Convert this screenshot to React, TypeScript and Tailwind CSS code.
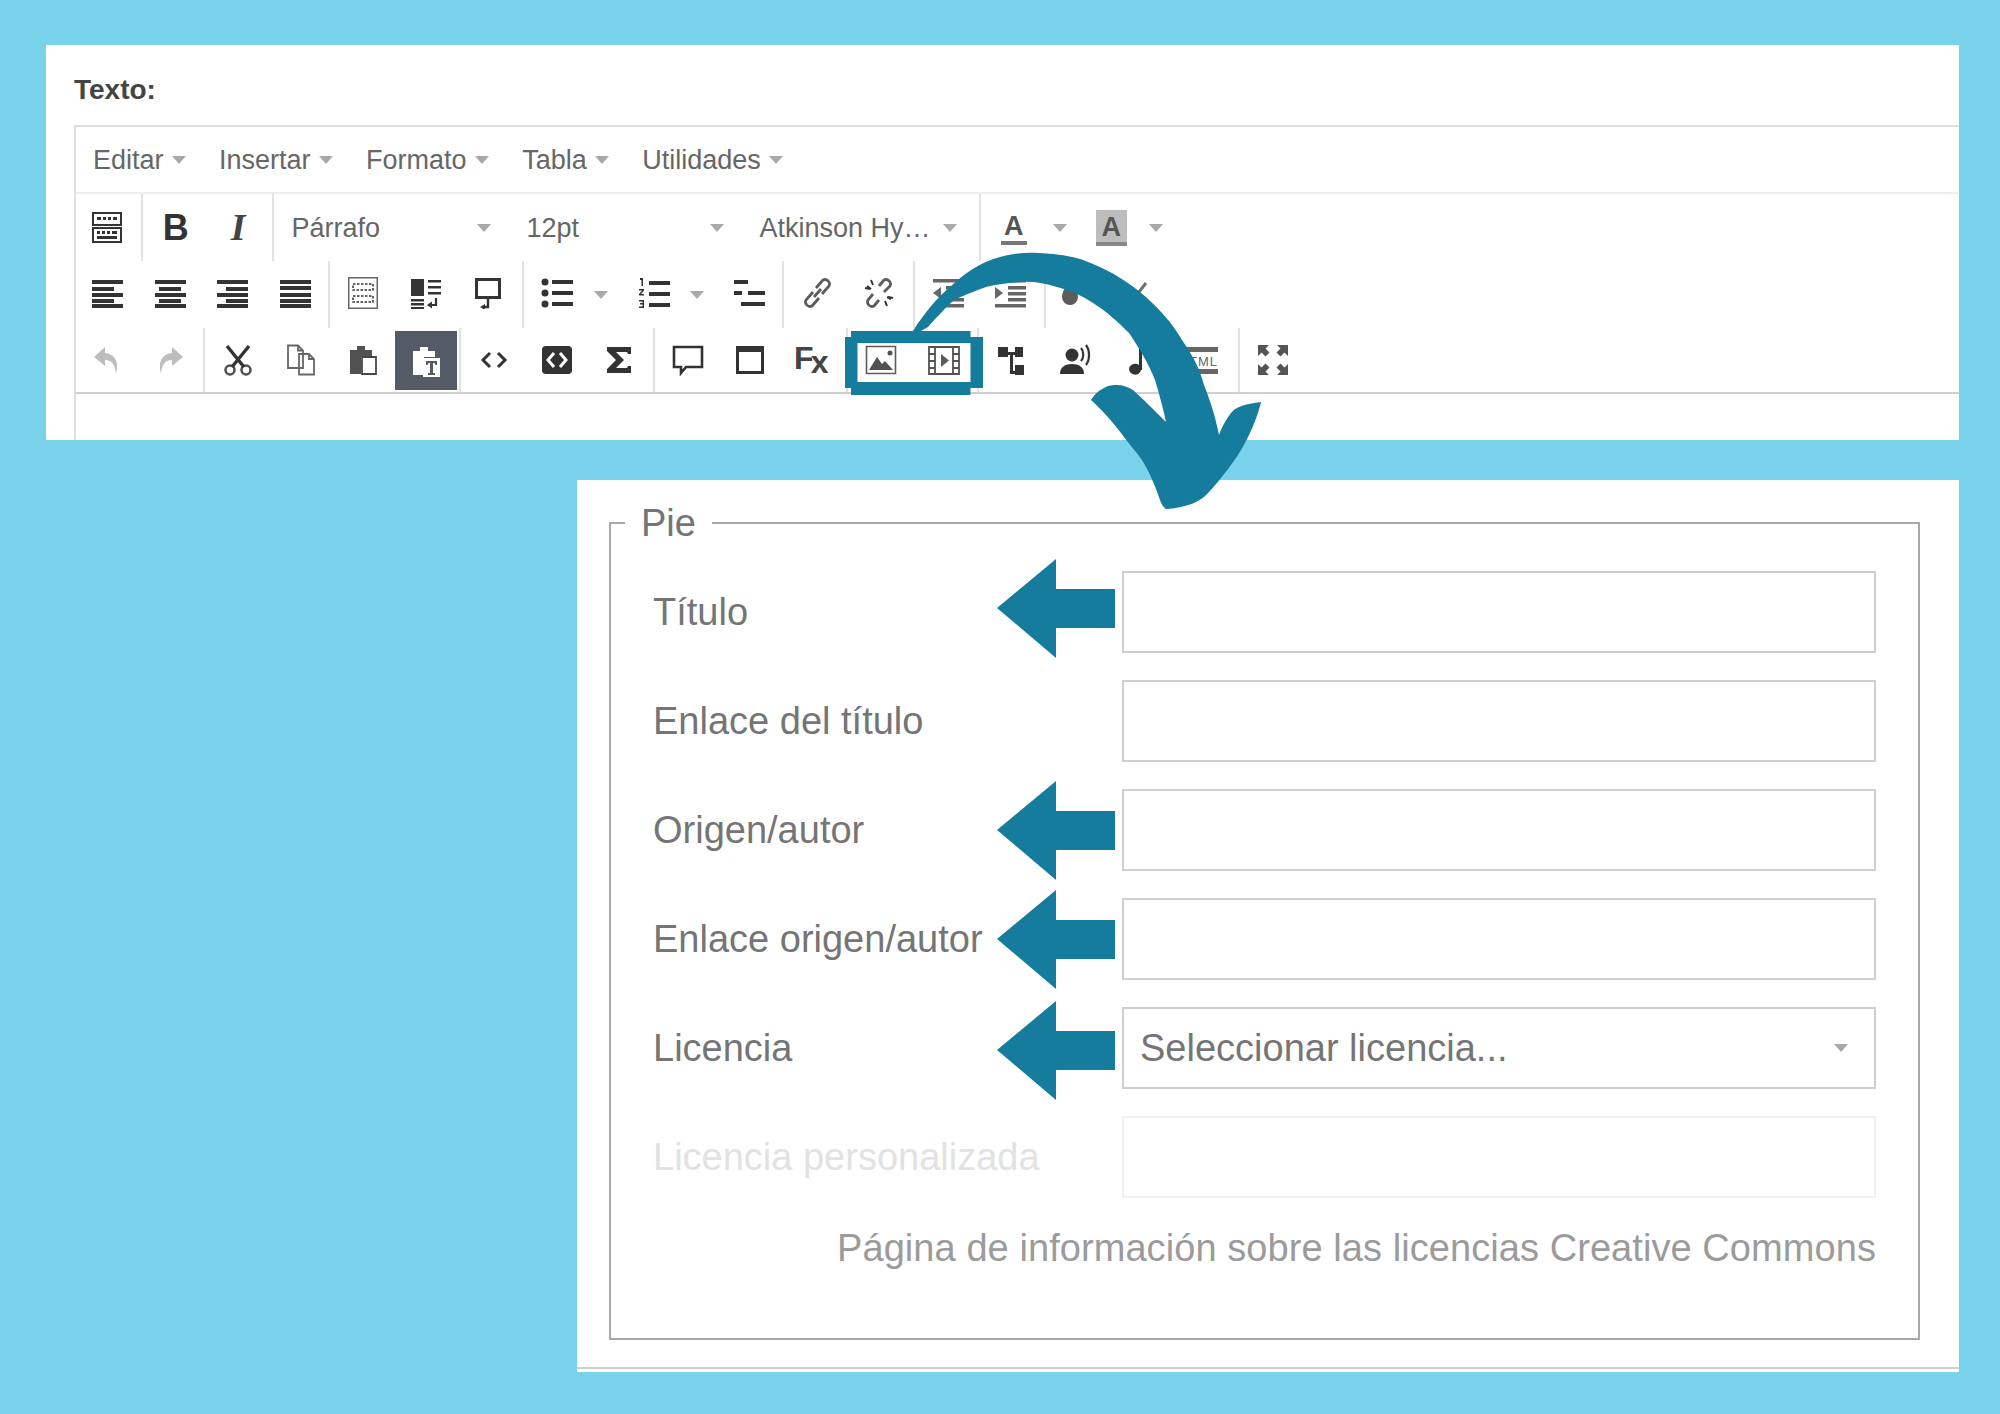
import type { ReactNode } from "react";

const BLUE = "#167c9e";

function Svg({ children, className = "" }: { children: ReactNode; className?: string }) {
  return (
    <svg viewBox="0 0 32 32" className={`w-8 h-8 ${className}`} fill="currentColor">
      {children}
    </svg>
  );
}

// bars: [x, y, w]
function Bars({ rows, h = 4 }: { rows: number[][]; h?: number }) {
  return (
    <Svg>
      {rows.map(([x, y, w], i) => (
        <rect key={i} x={x} y={y} width={w} height={h} />
      ))}
    </Svg>
  );
}

const icons: Record<string, ReactNode> = {
  keyboard: (
    <Svg>
      <path fillRule="evenodd" d="M1 0h30v14H1zM3 2v10h26V2zM1 15h30v16H1zM3 17v12h26V17z" />
      <path d="M6 5h4v3H6zM12 5h3v3h-3zM17 5h3v3h-3zM22 5h4v3h-4zM6 19h3v3H6zM11 19h3v3h-3zM16 19h3v3h-3zM21 19h5v3h-5zM6 24h20v3H6z" />
    </Svg>
  ),
  alignLeft: <Bars rows={[[1, 3, 31], [1, 10, 22], [1, 16, 31], [1, 22, 22], [1, 27, 31]]} />,
  alignCenter: <Bars rows={[[1, 3, 31], [5, 10, 22], [1, 16, 31], [5, 22, 22], [1, 27, 31]]} />,
  alignRight: <Bars rows={[[1, 3, 31], [10, 10, 22], [1, 16, 31], [10, 22, 22], [1, 27, 31]]} />,
  alignFull: <Bars rows={[[1, 3, 31], [1, 9, 31], [1, 16, 31], [1, 22, 31], [1, 27, 31]]} />,
  template: (
    <Svg>
      <path fillRule="evenodd" d="M1 0h30v32H1zM2.500 1.500v29h27v-29z" opacity=".75" />
      <path d="M6 7h20v6H6zM6 19h20v6H6z" fill="none" stroke="currentColor" strokeWidth="1.500" strokeDasharray="2.500 1.500" />
    </Svg>
  ),
  blockText: (
    <Svg>
      <path d="M1 2h13v17H1zM18 3h13v2.500H18zM18 9h13v2.500H18zM18 15h13v2.500H18zM1 22h13v2.500H1zM1 26h13v2.500H1zM1 30h13v2H1z" />
      <path d="M26 21v7h-6" fill="none" stroke="currentColor" strokeWidth="2.200" />
      <path d="M22 24.500l-5 3.500 5 3.500z" />
    </Svg>
  ),
  monitor: (
    <Svg>
      <path fillRule="evenodd" d="M3 1h26v21H3zM6 4v15h20V4z" />
      <path d="M16 22v8h-5" fill="none" stroke="currentColor" strokeWidth="2.400" />
      <path d="M13 27l-5 3 5 3z" />
    </Svg>
  ),
  bullets: (
    <Svg>
      <circle cx="4" cy="5" r="3.500" />
      <circle cx="4" cy="16" r="3.500" />
      <circle cx="4" cy="27" r="3.500" />
      <path d="M11 3h21v4H11zM11 14h21v4H11zM11 25h21v4H11z" />
    </Svg>
  ),
  numbers: (
    <Svg>
      <path d="M2 1h3v8H3.500V3H2zM1 12h5v1.500l-3 3.500h3v1.500H1V17l3-3.500H1zM1 23h5v8H1v-1.500h3.500v-2H2V26h2.500v-1.500H1z" />
      <path d="M11 4h21v4H11zM11 15h21v4H11zM11 26h21v4H11z" />
    </Svg>
  ),
  tree: <Bars rows={[[1, 3, 14], [1, 14, 8], [15, 14, 17], [8, 25, 24]]} />,
  link: (
    <Svg>
      <path
        d="M13 20l7-8M12 15l-7 8a4.500 4.500 0 0 0 6 6l7-8M15 11l7-8a4.500 4.500 0 0 1 6 6l-7 8"
        fill="none"
        stroke="currentColor"
        strokeWidth="2.800"
        opacity=".8"
      />
    </Svg>
  ),
  unlink: (
    <Svg>
      <path
        d="M10 17l-5 6a4.500 4.500 0 0 0 6 6l5-6M21 15l6-6a4.500 4.500 0 0 0-6-6l-5 6"
        fill="none"
        stroke="currentColor"
        strokeWidth="2.800"
        opacity=".8"
      />
      <path d="M8 3l2 5M2 11l5 1M24 29l-2-5M30 21l-5-1M24 20l4 2M8 12L4 9" fill="none" stroke="currentColor" strokeWidth="2" />
    </Svg>
  ),
  outdent: (
    <Svg>
      <path d="M1 2h31v3.500H1zM14 9h18v3.500H14zM14 15h18v3.500H14zM14 21h18v3.500H14zM1 27h31v3.500H1zM9 10v12l-8-6z" opacity=".75" />
    </Svg>
  ),
  indent: (
    <Svg>
      <path d="M1 2h31v3.500H1zM14 9h18v3.500H14zM14 15h18v3.500H14zM14 21h18v3.500H14zM1 27h31v3.500H1zM1 10v12l8-6z" opacity=".75" />
    </Svg>
  ),
  drop: (
    <Svg>
      <path d="M16 4c5 7 8 11 8 16a8 8 0 0 1-16 0c0-5 3-9 8-16z" opacity=".8" />
    </Svg>
  ),
  check: (
    <Svg>
      <path d="M6 18l6 6L26 6" fill="none" stroke="currentColor" strokeWidth="3" opacity=".7" />
    </Svg>
  ),
  undo: (
    <Svg className="text-[#bdbdbd]">
      <path d="M14 3L3 13l11 9v-6c6 0 10 3 11 14 3-11 0-20-11-21z" />
    </Svg>
  ),
  redo: (
    <Svg className="text-[#bdbdbd]">
      <path d="M18 3l11 10-11 9v-6c-6 0-10 3-11 14-3-11 0-20 11-21z" />
    </Svg>
  ),
  cut: (
    <Svg>
      <circle cx="8" cy="26" r="4.500" fill="none" stroke="currentColor" strokeWidth="2.600" opacity=".85" />
      <circle cx="24" cy="26" r="4.500" fill="none" stroke="currentColor" strokeWidth="2.600" opacity=".85" />
      <path d="M5 2l17 21M27 2L10 23" fill="none" stroke="currentColor" strokeWidth="3.400" />
    </Svg>
  ),
  copy: (
    <Svg>
      <path
        d="M3 1.500h10l5 5V24H3zM13 1.500v5h5M14 10h10l5 5v15.500H14zM24 10v5h5"
        fill="none"
        stroke="currentColor"
        strokeWidth="1.800"
        opacity=".75"
      />
    </Svg>
  ),
  paste: (
    <Svg>
      <path d="M3 6h7V2h8v4h7v6H14v18H3z" opacity=".85" />
      <path d="M15 13h14v17H15z" fill="#fff" stroke="currentColor" strokeWidth="1.800" opacity=".9" />
    </Svg>
  ),
  pasteText: (
    <Svg className="text-white">
      <path d="M3 6h7V2h8v4h7v6H14v18H3z" />
      <path d="M13 13h17v19H13z" />
      <path d="M16 16h11v4h-1.500l-1-2H23v10h2v2h-7v-2h2V18h-1.500l-1 2H16z" fill="#545b67" />
    </Svg>
  ),
  code: (
    <Svg>
      <path d="M12 9l-7 7 7 7M20 9l7 7-7 7" fill="none" stroke="currentColor" strokeWidth="3" />
    </Svg>
  ),
  codeBlock: (
    <Svg>
      <rect x="1" y="2" width="30" height="28" rx="4" />
      <path d="M13 9l-6 7 6 7M19 9l6 7-6 7" fill="none" stroke="#fff" strokeWidth="3" />
    </Svg>
  ),
  sigma: (
    <Svg>
      <path d="M4 3h24v7h-3l-1-2H13l8 8-8 8h11l1-2h3v7H4v-4l9-9-9-9z" />
    </Svg>
  ),
  comment: (
    <Svg>
      <path d="M2 3h28v20H14l-5 6v-6H2z" fill="none" stroke="currentColor" strokeWidth="2.600" />
    </Svg>
  ),
  window: (
    <Svg>
      <path fillRule="evenodd" d="M2 2h28v28H2zM5 8v19h22V8z" />
    </Svg>
  ),
  image: (
    <Svg>
      <path d="M1.500 2.500h29v27h-29z" fill="none" stroke="currentColor" strokeWidth="1.600" opacity=".8" />
      <path d="M4 26l8-13 5 7 3-3 8 9z" opacity=".85" />
      <circle cx="25" cy="9" r="2.500" opacity=".85" />
    </Svg>
  ),
  video: (
    <Svg>
      <path d="M1 3h30v27H1zM7 3v27M25 3v27M1 10h6M1 17h6M1 24h6M25 10h6M25 17h6M25 24h6" fill="none" stroke="currentColor" strokeWidth="1.800" opacity=".85" />
      <path d="M13 10l8 6.500-8 6.500z" opacity=".8" />
    </Svg>
  ),
  toc: (
    <Svg>
      <path d="M2 3h10v10H2zM19 3h8v10h-8zM19 21h9v10h-9z" />
      <path d="M12 8h7v3h-7zM14 11h3v16h5v3h-8z" />
    </Svg>
  ),
  voice: (
    <Svg>
      <circle cx="13" cy="11" r="6.500" />
      <path d="M1 30c0-7 5-10 12-10s12 3 12 10z" />
      <path d="M22 4c3 3 3 10 0 13M27 1c4 5 4 15 0 20" fill="none" stroke="currentColor" strokeWidth="2.200" />
    </Svg>
  ),
  note: (
    <Svg>
      <path d="M18 1h3v25h-1a6 5.500 0 1 1-2-5z" />
    </Svg>
  ),
  html: (
    <Svg className="text-[#666]">
      <path d="M0 3h32v5H0zM0 25h32v5H0z" />
      <text x="3" y="21.500" fontFamily="Liberation Sans, sans-serif" fontSize="13" letterSpacing="1">
        TML
      </text>
    </Svg>
  ),
  fullscreen: (
    <Svg className="text-[#555]">
      <path d="M1 1h11l-3.500 3.500 4 4-4 4-4-4L1 12zM31 1H20l3.500 3.500-4 4 4 4 4-4L31 12zM1 31h11l-3.500-3.500 4-4-4-4-4 4L1 20zM31 31H20l3.500-3.500-4-4 4-4 4 4L31 20z" />
    </Svg>
  ),
};

function Btn({ icon, w = "w-[62.5px]" }: { icon: string; w?: string }) {
  return <div className={`${w} shrink-0 flex items-center justify-center text-[#333]`}>{icons[icon]}</div>;
}

function TextBtn({ children, className = "" }: { children: ReactNode; className?: string }) {
  return <div className={`w-[62.5px] shrink-0 flex items-center justify-center text-[#333] ${className}`}>{children}</div>;
}

function Sep() {
  return (
    <div className="w-[6px] shrink-0 flex justify-center">
      <div className="w-[2px] bg-[#e2e2e2]" />
    </div>
  );
}

function Caret({ className = "" }: { className?: string }) {
  return <span className={`block w-0 h-0 border-x-[7px] border-x-transparent border-t-[8px] border-t-[#a9a9a9] ${className}`} />;
}

function CaretBtn({ w, ml }: { w: string; ml: string }) {
  return (
    <div className={`${w} shrink-0 flex items-center`}>
      <Caret className={ml} />
    </div>
  );
}

function MenuItem({ label }: { label: string }) {
  return (
    <div className="flex items-center mr-[33.500px]">
      <span className="pt-[1px]">{label}</span>
      <Caret className="ml-[8px]" />
    </div>
  );
}

function SelectBox({ label, w }: { label: string; w: string }) {
  return (
    <div className={`${w} shrink-0 flex items-center justify-between pl-[16px] pr-[20px] text-[27px] text-[#666]`}>
      <span className="pt-[1px]">{label}</span>
      <Caret />
    </div>
  );
}

function FormRow({ label, disabled, children }: { label: string; disabled?: boolean; children?: ReactNode }) {
  return (
    <div className="flex items-center h-[82px]">
      <label className={`w-[469px] shrink-0 ${disabled ? "text-[#e2e2e2]" : "text-[#757575]"}`}>{label}</label>
      <div
        className={`flex-1 h-full flex items-center justify-between border-2 pl-[16px] pr-[26px] ${
          disabled ? "border-[#f0f0f0]" : "border-[#cfcfcf]"
        }`}
      >
        {children}
      </div>
    </div>
  );
}

function SmallArrow({ y }: { y: number }) {
  const p = [
    [997, y],
    [1056, y - 49],
    [1056, y - 19],
    [1115, y - 19],
    [1115, y + 20],
    [1056, y + 20],
    [1056, y + 50],
  ];
  return <polygon points={p.map((q) => q.join(",")).join(" ")} fill={BLUE} />;
}

function Overlay() {
  return (
    <svg viewBox="0 0 2000 1414" className="absolute inset-0 w-[2000px] h-[1414px] pointer-events-none">
      <path
        fill={BLUE}
        fillRule="evenodd"
        d="M851 331H970.500V337H983V388H970.500V395H851V388H845V337H851ZM857.500 343V382H970.500V343Z"
      />
      <path
        fill={BLUE}
        d="M913 331C925 312 937 298 950 287C964 274 980 262 1000 257C1014 253 1028 252 1039 253C1058 254 1076 256 1093 264C1113 272 1131 284 1146 297C1162 312 1173 324 1182 340C1194 358 1199 367 1204 385C1212 405 1216 420 1219 435C1223 424 1228 417 1231 413C1235 407 1245 404 1261 402C1258 415 1252 430 1245 443C1236 460 1220 480 1209 492C1201 502 1185 508 1166 509C1163 507 1161 503 1160 500C1156 488 1151 476 1146 467C1140 455 1132 448 1124 437C1114 423 1100 408 1091 400C1095 394 1098 391 1104 388C1109 385 1113 385 1117 385C1123 385 1128 387 1133 390C1144 400 1156 412 1166 422C1163 408 1159 393 1155 380C1148 362 1139 348 1129 333C1118 322 1106 311 1093 303C1081 295 1069 290 1057 287C1044 283 1033 281 1021 282C1009 283 997 284 986 287C975 291 964 295 954 300C945 308 936 318 928 327L921 331Z"
      />
      <SmallArrow y={608} />
      <SmallArrow y={830} />
      <SmallArrow y={939} />
      <SmallArrow y={1050} />
    </svg>
  );
}

export default function App() {
  return (
    <div className="relative w-[2000px] h-[1414px] overflow-hidden bg-[#78d3ea] pt-[45px] font-['Liberation_Sans',sans-serif]">
      {/* editor panel */}
      <div className="ml-[46px] w-[1913px] h-[395px] overflow-hidden bg-white pl-[28px] pt-[27px]">
        <div className="h-[36px] flex items-center text-[28px] font-bold text-[#444]">Texto:</div>
        <div className="mt-[17px] border-l-2 border-t-2 border-[#dedede] h-[400px]">
          <div className="h-[67px] flex items-center pl-[17px] text-[27px] text-[#666] border-b-2 border-[#eeeeee]">
            {["Editar", "Insertar", "Formato", "Tabla", "Utilidades"].map((m) => (
              <MenuItem key={m} label={m} />
            ))}
          </div>
          <div className="h-[67px] flex">
            <Btn icon="keyboard" />
            <Sep />
            <TextBtn className="text-[36px] font-bold">B</TextBtn>
            <TextBtn className="text-[38px] italic font-bold font-['Liberation_Serif',serif] text-[#444]">I</TextBtn>
            <Sep />
            <SelectBox label="Párrafo" w="w-[235px]" />
            <SelectBox label="12pt" w="w-[233px]" />
            <SelectBox label="Atkinson Hy…" w="w-[233px]" />
            <Sep />
            <TextBtn>
              <span className="text-[27px] font-bold leading-[30px] px-[3px] text-[#555] border-b-[4px] border-[#777]">A</span>
            </TextBtn>
            <CaretBtn w="w-[35px]" ml="ml-[8px]" />
            <TextBtn>
              <span className="text-[27px] font-bold leading-[30px] px-[6px] pt-[2px] text-[#555] bg-[#bdbdbd] border-b-[4px] border-[#888]">A</span>
            </TextBtn>
            <CaretBtn w="w-[36px]" ml="ml-[6px]" />
          </div>
          <div className="h-[67px] flex [&_svg]:-translate-y-[2px]">
            <Btn icon="alignLeft" />
            <Btn icon="alignCenter" />
            <Btn icon="alignRight" />
            <Btn icon="alignFull" />
            <Sep />
            <Btn icon="template" />
            <Btn icon="blockText" />
            <Btn icon="monitor" />
            <Sep />
            <Btn icon="bullets" w="w-[62px]" />
            <CaretBtn w="w-[35px]" ml="ml-[6px]" />
            <Btn icon="numbers" w="w-[62px]" />
            <CaretBtn w="w-[33px]" ml="ml-[5px]" />
            <Btn icon="tree" w="w-[62px]" />
            <Sep />
            <Btn icon="link" />
            <Btn icon="unlink" />
            <Sep />
            <Btn icon="outdent" />
            <Btn icon="indent" />
            <Sep />
            <Btn icon="drop" w="w-[44px]" />
            <Btn icon="check" w="w-[88px]" />
          </div>
          <div className="h-[66px] flex border-b-2 border-[#cfcfcf]">
            <Btn icon="undo" />
            <Btn icon="redo" />
            <Sep />
            <Btn icon="cut" />
            <Btn icon="copy" />
            <Btn icon="paste" />
            <div className="w-[62.500px] h-[59px] mt-[3px] shrink-0 flex items-center justify-center bg-[#545b67]">{icons.pasteText}</div>
            <Sep />
            <Btn icon="code" />
            <Btn icon="codeBlock" />
            <Btn icon="sigma" />
            <Sep />
            <Btn icon="comment" />
            <Btn icon="window" />
            <TextBtn className="text-[32px] font-bold text-[#444] tracking-[-3px] pr-[6px]">
              <span className="-translate-y-[2px]">F</span>
              <span className="translate-y-[2px]">x</span>
            </TextBtn>
            <Sep />
            <Btn icon="image" />
            <Btn icon="video" />
            <Sep />
            <Btn icon="toc" />
            <Btn icon="voice" />
            <Btn icon="note" />
            <Btn icon="html" w="w-[67px]" />
            <Sep />
            <Btn icon="fullscreen" />
          </div>
        </div>
      </div>

      {/* media caption panel */}
      <div className="mt-[40px] ml-[577px] w-[1382px] h-[892px] bg-white pt-[21px] text-[38px] text-[#757575]">
        <fieldset className="ml-[32px] w-[1311px] border-2 border-[#a8a8a8] px-[42px] pb-[68px] pt-[26px]">
          <legend className="-ml-[28px] px-[16px] leading-[44px]">Pie</legend>
          <div className="flex flex-col gap-[27px]">
            <FormRow label="Título" />
            <FormRow label="Enlace del título" />
            <FormRow label="Origen/autor" />
            <FormRow label="Enlace origen/autor" />
            <FormRow label="Licencia">
              <span>Seleccionar licencia...</span>
              <Caret />
            </FormRow>
            <FormRow label="Licencia personalizada" disabled />
          </div>
          <div className="mt-[28px] text-right leading-[44px] text-[#9b9b9b] tracking-[0.070px]">Página de información sobre las licencias Creative Commons</div>
        </fieldset>
        <div className="mt-[27px] h-[2px] bg-[#d0d0d0]" />
      </div>

      <Overlay />
    </div>
  );
}
